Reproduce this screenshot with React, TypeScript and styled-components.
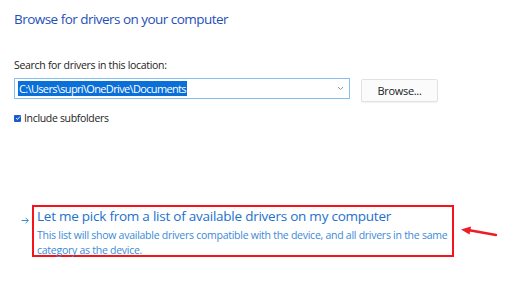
import React from "react";
import styled, { createGlobalStyle } from "styled-components";

const GlobalStyle = createGlobalStyle`
  html, body {
    margin: 0;
    padding: 0;
    background: #ffffff;
  }
  body {
    font-family: "Open Sans", "Noto Sans", sans-serif;
  }
`;

//Whole page
const Page = styled.div`
  width: 520px;
  height: 286px;
  box-sizing: border-box;
  padding: 9px 0 0 14px;
  display: flex;
  flex-flow: column nowrap;
  overflow: hidden;
`;

const Title = styled.div`
  font-size: 13.5px;
  line-height: 20px;
  color: #1f50b8;
  letter-spacing: -0.53px;
`;

const Label = styled.div`
  margin-top: 28px;
  font-size: 10.5px;
  line-height: 16px;
  color: #222222;
  letter-spacing: -0.3px;
`;

//Path input + browse
const LocationRow = styled.div`
  margin-top: 5px;
  display: flex;
  flex-flow: row nowrap;
  align-items: flex-start;
`;

const PathBox = styled.div`
  width: 336px;
  height: 21px;
  box-sizing: border-box;
  border: 1px solid #86bff0;
  display: flex;
  flex-flow: row nowrap;
  align-items: center;
  justify-content: space-between;
  padding: 0 5px 0 3px;
`;

const Selected = styled.span`
  background: #0a6fd8;
  color: #ffffff;
  font-size: 11px;
  line-height: 15px;
  padding: 0 1px;
  letter-spacing: -0.65px;
`;

const Chevron = styled.svg`
  width: 7px;
  height: 5px;
`;

const BrowseButton = styled.div`
  margin-left: 11px;
  margin-top: 1px;
  width: 77px;
  height: 23px;
  box-sizing: border-box;
  border: 1px solid #e2e2e2;
  border-radius: 2px;
  background: #fbfbfb;
  box-shadow: 0 1px 1px rgba(0, 0, 0, 0.06);
  display: flex;
  align-items: center;
  justify-content: center;
  font-size: 11px;
  letter-spacing: -0.3px;
  color: #222222;
`;

const CheckRow = styled.div`
  margin-top: 8px;
  display: flex;
  flex-flow: row nowrap;
  align-items: center;
  gap: 3px;
  font-size: 10.5px;
  line-height: 16px;
  letter-spacing: -0.33px;
  color: #222222;
`;

const CheckBox = styled.div`
  width: 7px;
  height: 7px;
  border-radius: 1px;
  background: #1a5cc8;
  display: flex;
  align-items: center;
  justify-content: center;
`;

//Bottom link option
const OptionRow = styled.div`
  margin-top: 79px;
  display: flex;
  flex-flow: row nowrap;
  align-items: center;
`;

const OptionArrow = styled.svg`
  width: 8px;
  height: 7px;
  margin: -22px 3px 0 7px;
`;

const Highlight = styled.div`
  width: 422px;
  height: 52px;
  box-sizing: border-box;
  border: 2px solid #f5141b;
  padding: 0 0 0 3px;
  display: flex;
  flex-flow: column nowrap;
`;

const OptionTitle = styled.div`
  font-size: 13.5px;
  line-height: 19px;
  color: #2271cc;
  letter-spacing: -0.24px;
  white-space: nowrap;
`;

const OptionText = styled.div`
  margin-top: 2px;
  font-size: 10.5px;
  line-height: 15px;
  color: #3a8ad9;
  letter-spacing: -0.26px;
  white-space: nowrap;
`;

const Pointer = styled.svg`
  margin: 4px 0 0 6px;
  width: 40px;
  height: 14px;
`;

const App = () => {
  return (
    <>
      <GlobalStyle />
      <Page>
        <Title>Browse for drivers on your computer</Title>
        <Label>Search for drivers in this location:</Label>
        <LocationRow>
          <PathBox>
            <Selected>C:\Users\supri\OneDrive\Documents</Selected>
            <Chevron viewBox="0 0 7 5">
              <path d="M1 1 L3.5 3.5 L6 1" fill="none" stroke="#8a8a8a" strokeWidth="0.9" />
            </Chevron>
          </PathBox>
          <BrowseButton>Browse...</BrowseButton>
        </LocationRow>
        <CheckRow>
          <CheckBox>
            <svg width="6" height="6" viewBox="0 0 6 6">
              <path d="M1 3 L2.5 4.5 L5 1.5" fill="none" stroke="#ffffff" strokeWidth="0.9" />
            </svg>
          </CheckBox>
          Include subfolders
        </CheckRow>
        <OptionRow>
          <OptionArrow viewBox="0 0 8 7">
            <path d="M0.5 3.5 H7.3 M4.6 0.8 L7.3 3.5 L4.6 6.2" fill="none" stroke="#3d8ad8" strokeWidth="1" />
          </OptionArrow>
          <Highlight>
            <OptionTitle>Let me pick from a list of available drivers on my computer</OptionTitle>
            <OptionText>
              This list will show available drivers compatible with the device, and all drivers in the same
              <br />
              category as the device.
            </OptionText>
          </Highlight>
          <Pointer viewBox="0 0 40 14">
            <path d="M36 9 L8 4" stroke="#ee1c25" strokeWidth="2.4" strokeLinecap="round" />
            <path d="M1 3.5 L11 0.5 L9.5 8.5 Z" fill="#ee1c25" />
          </Pointer>
        </OptionRow>
      </Page>
    </>
  );
};

export default App;
